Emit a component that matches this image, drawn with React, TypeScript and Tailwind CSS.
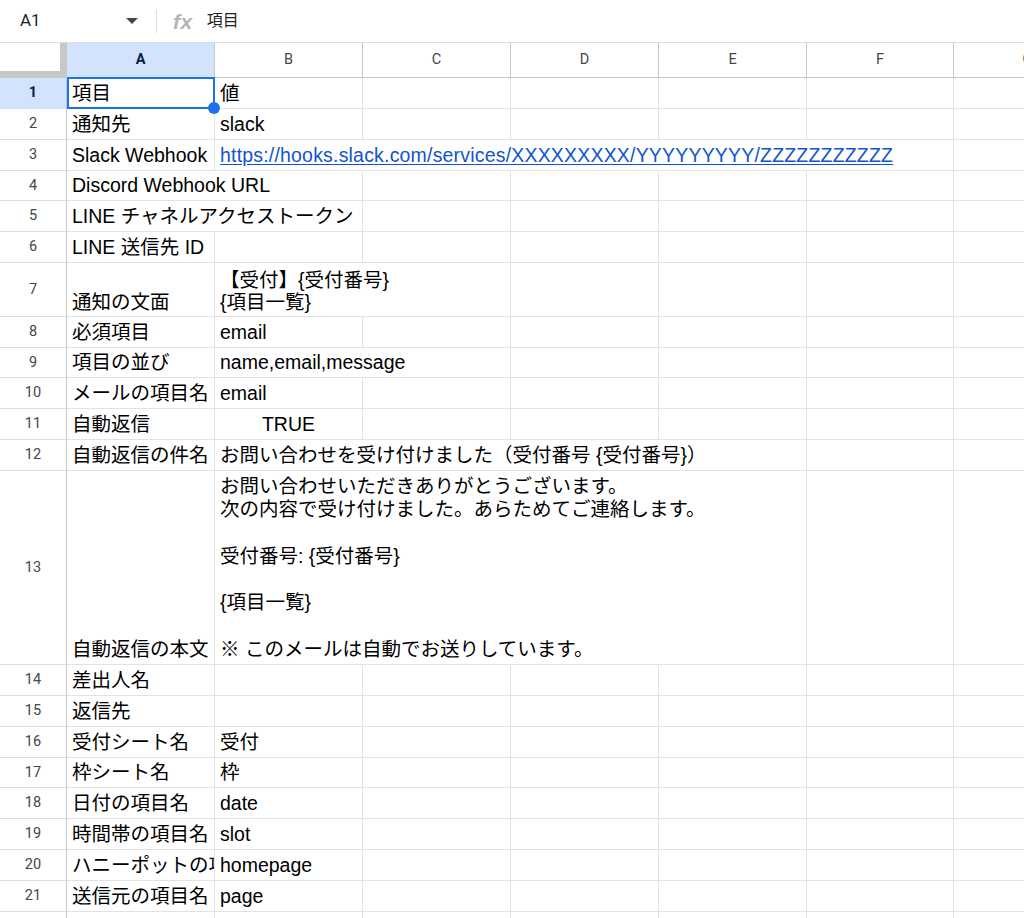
import React from 'react';

type Row = {
  n: number;
  h: string;
  a?: string;
  b?: string;
  link?: boolean;
  center?: boolean;
  hide?: number[];
  clipA?: boolean;
  lead?: string;
  noNum?: boolean;
};

const URL = 'https://hooks.slack.com/services/XXXXXXXXX/YYYYYYYYY/ZZZZZZZZZZZ';

const BODY =
  'お問い合わせいただきありがとうございます。\n次の内容で受け付けました。あらためてご連絡します。\n\n受付番号: {受付番号}\n\n{項目一覧}\n\n※ このメールは自動でお送りしています。';

const rows: Row[] = [
  { n: 1, h: 'h-[31px]', a: '項目', b: '値' },
  { n: 2, h: 'h-[31px]', a: '通知先', b: 'slack' },
  { n: 3, h: 'h-[31px]', a: 'Slack Webhook', b: URL, link: true, hide: [1, 2, 3, 4] },
  { n: 4, h: 'h-[30px]', a: 'Discord Webhook URL', hide: [0] },
  { n: 5, h: 'h-[31px]', a: 'LINE チャネルアクセストークン', hide: [0] },
  { n: 6, h: 'h-[31px]', a: 'LINE 送信先 ID' },
  { n: 7, h: 'h-[54px]', a: '通知の文面', b: '【受付】{受付番号}\n{項目一覧}', hide: [1], lead: 'leading-[22px]' },
  { n: 8, h: 'h-[31px]', a: '必須項目', b: 'email' },
  { n: 9, h: 'h-[30px]', a: '項目の並び', b: 'name,email,message', hide: [1] },
  { n: 10, h: 'h-[31px]', a: 'メールの項目名', b: 'email' },
  { n: 11, h: 'h-[31px]', a: '自動返信', b: 'TRUE', center: true },
  { n: 12, h: 'h-[31px]', a: '自動返信の件名', b: 'お問い合わせを受け付けました（受付番号 {受付番号}）', hide: [1, 2, 3] },
  { n: 13, h: 'h-[194px]', a: '自動返信の本文', b: BODY, hide: [1, 2, 3], lead: 'leading-[23.3px]' },
  { n: 14, h: 'h-[31px]', a: '差出人名' },
  { n: 15, h: 'h-[31px]', a: '返信先' },
  { n: 16, h: 'h-[31px]', a: '受付シート名', b: '受付' },
  { n: 17, h: 'h-[30px]', a: '枠シート名', b: '枠' },
  { n: 18, h: 'h-[31px]', a: '日付の項目名', b: 'date' },
  { n: 19, h: 'h-[31px]', a: '時間帯の項目名', b: 'slot' },
  { n: 20, h: 'h-[31px]', a: 'ハニーポットの項目名', b: 'homepage', clipA: true },
  { n: 21, h: 'h-[31px]', a: '送信元の項目名', b: 'page' },
];

const colW = ['w-[148px]', 'w-[148px]', 'w-[148px]', 'w-[148px]', 'w-[148px]', 'w-[147px]', 'w-[148px]'];
const letters = ['A', 'B', 'C', 'D', 'E', 'F', 'G'];

function Toolbar() {
  return (
    <div className="h-[43px] border-b border-[#dadce0] flex items-center font-['Roboto','Noto_Sans_CJK_JP',sans-serif] shrink-0">
      <div className="w-[156px] h-full flex items-center justify-between pl-[20px] pr-[18px]">
        <span className="text-[17px] text-[#1f1f1f]">A1</span>
        <svg width="12" height="6" viewBox="0 0 12 6">
          <polygon points="0,0 12,0 6,6" fill="#444746" />
        </svg>
      </div>
      <div className="w-px h-[23px] bg-[#e0e0e0]" />
      <span className="ml-[16px] italic font-bold text-[21px] leading-none text-[#b4b4b4] font-['Liberation_Sans',sans-serif] tracking-[0.5px]">
        fx
      </span>
      <span className="ml-[14px] text-[16px] text-[#1f1f1f]">項目</span>
    </div>
  );
}

function HeaderRow() {
  return (
    <div className="flex h-[35px] shrink-0">
      <div className="w-[67px] shrink-0 bg-white border-r-[7px] border-b-[7px] border-[#c7c7c7]" />
      {letters.map((l, i) => (
        <div
          key={l}
          className={`${colW[i]} shrink-0 border-r border-b border-[#c4c7c5] flex items-center justify-center font-['Roboto',sans-serif] text-[14.5px] ${
            i === 0 ? 'bg-[#d3e3fd] text-[#041e49] font-bold' : 'text-[#444746]'
          }`}
        >
          {l}
        </div>
      ))}
    </div>
  );
}

function DataRow({ r }: { r: Row }) {
  return (
    <div className={`flex shrink-0 ${r.h}`}>
      <div
        className={`w-[67px] shrink-0 border-r border-b border-r-[#c4c7c5] border-b-[#dadce0] flex items-center justify-center font-['Roboto',sans-serif] text-[14.5px] ${
          r.n === 1 ? 'bg-[#d3e3fd] text-[#041e49] font-bold' : 'text-[#444746]'
        }`}
      >
        {r.noNum ? '' : r.n}
      </div>
      {colW.map((w, i) => {
        const hidden = r.hide?.includes(i);
        const content = i === 0 ? r.a : i === 1 ? r.b : undefined;
        const isLink = i === 1 && r.link;
        const isCenter = i === 1 && r.center;
        return (
          <div
            key={i}
            className={`${w} shrink-0 relative border-b border-r border-b-[#e2e2e2] ${
              hidden ? 'border-r-transparent' : 'border-r-[#e2e2e2]'
            } flex items-end ${i === 0 && r.clipA ? 'overflow-hidden' : ''}`}
          >
            {content !== undefined && (
              <div
                className={`relative z-10 px-[5px] pb-[3px] text-[19.5px] whitespace-pre ${r.lead ?? 'leading-[23px]'} ${
                  isCenter ? 'w-full text-center' : ''
                } ${isLink ? 'text-[#1155cc] underline underline-offset-[2px] tracking-[0.19px]' : 'text-black'}`}
              >
                {content}
              </div>
            )}
            {r.n === 1 && i === 0 && (
              <div className="absolute -top-px left-0 -right-px -bottom-px border-2 border-[#1a73e8] z-20 pointer-events-none">
                <div className="absolute -right-[7px] -bottom-[7px] w-[12px] h-[12px] rounded-full bg-[#1a73e8]" />
              </div>
            )}
          </div>
        );
      })}
    </div>
  );
}

export default function App() {
  return (
    <div className="w-[1024px] h-[918px] overflow-hidden bg-white flex flex-col font-['Liberation_Sans','Noto_Sans_CJK_JP',sans-serif]">
      <Toolbar />
      <HeaderRow />
      {rows.map((r) => (
        <DataRow key={r.n} r={r} />
      ))}
      <DataRow r={{ n: 22, h: 'h-[31px]', noNum: true }} />
    </div>
  );
}
